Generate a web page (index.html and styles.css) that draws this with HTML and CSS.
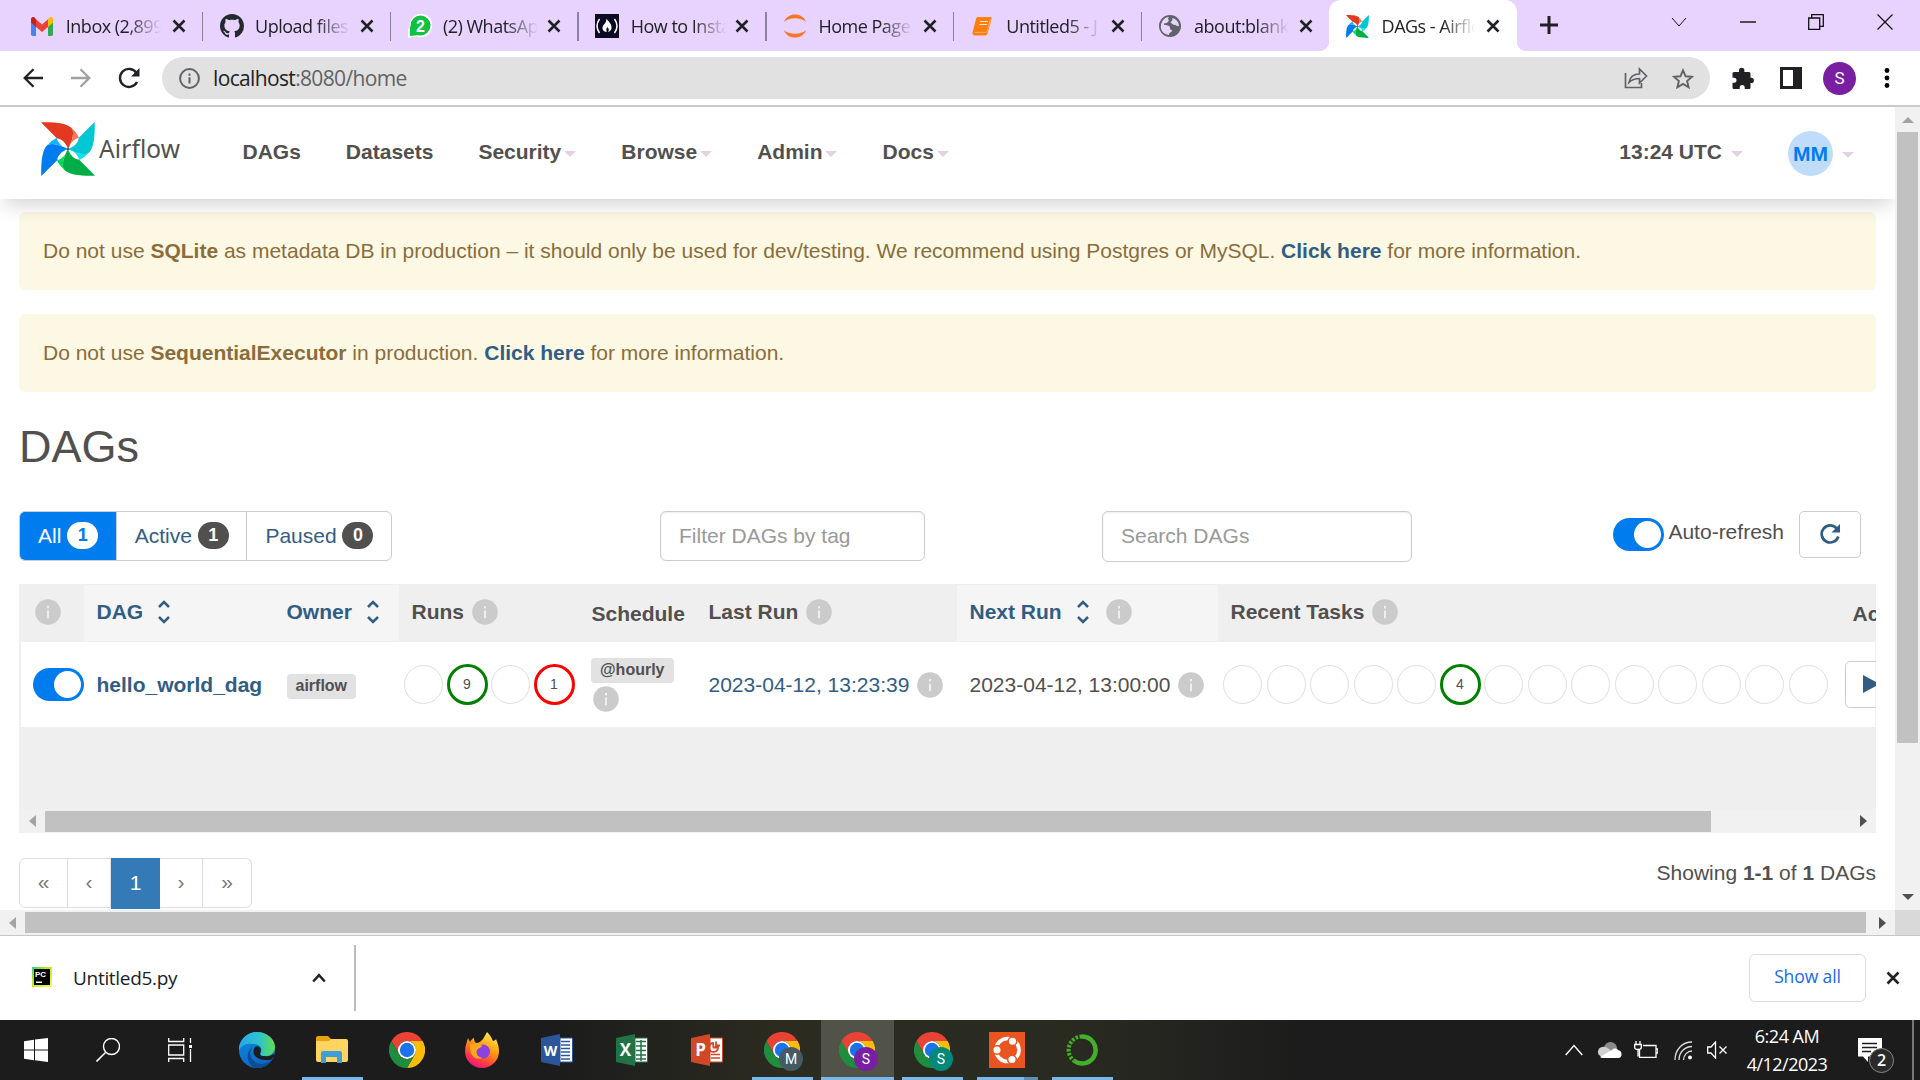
FILE: index.html
```html
<!DOCTYPE html>
<html lang="en">
<head>
<meta charset="utf-8">
<title>DAGs - Airflow</title>
<link rel="stylesheet" href="styles.css">
</head>
<body>
<svg class="defs" width="0" height="0">
  <symbol id="x" viewBox="0 0 14 14"><path d="M1.5 1.5l11 11M12.5 1.5l-11 11" stroke="#202124" stroke-width="2.6" fill="none"/></symbol>
  <symbol id="info" viewBox="0 0 26 26"><circle cx="13" cy="13" r="12.8" fill="#cbcbcb"/><path d="M12 7h2v2.6h-2zM12 11.4h2v7.8h-2z" fill="#efefef"/></symbol>
  <symbol id="sort" viewBox="0 0 12 24"><path d="M1 7l5-5 5 5M1 17l5 5 5-5" stroke="#315d84" stroke-width="2.5" fill="none"/></symbol>
  <symbol id="pin" viewBox="0 0 54 54">
    <g><path fill="#e43921" d="M0 .3C14 0 27 1 31.500 7C33.500 14 30 21 27 27C25 20 19 16 16 16.500Z"/><path fill="#ff7557" d="M31.500 7Q36 11 38 15.500C33 17 28 22 27 27C30 21 33.500 14 31.500 7Z"/></g>
    <g transform="rotate(90 27 27)"><path fill="#00c7d4" d="M0 .3C14 0 27 1 31.500 7C33.500 14 30 21 27 27C25 20 19 16 16 16.500Z"/><path fill="#11e1ee" d="M31.500 7Q36 11 38 15.500C33 17 28 22 27 27C30 21 33.500 14 31.500 7Z"/></g>
    <g transform="rotate(180 27 27)"><path fill="#00ad46" d="M0 .3C14 0 27 1 31.500 7C33.500 14 30 21 27 27C25 20 19 16 16 16.500Z"/><path fill="#04d659" d="M31.500 7Q36 11 38 15.500C33 17 28 22 27 27C30 21 33.500 14 31.500 7Z"/></g>
    <g transform="rotate(270 27 27)"><path fill="#017cee" d="M0 .3C14 0 27 1 31.500 7C33.500 14 30 21 27 27C25 20 19 16 16 16.500Z"/><path fill="#0cb6ff" d="M31.500 7Q36 11 38 15.500C33 17 28 22 27 27C30 21 33.500 14 31.500 7Z"/></g>
    <circle cx="27" cy="27" r="1.2" fill="#51504f"/>
  </symbol>
  <symbol id="chrome" viewBox="0 0 36 36">
    <path fill="#ea4335" d="M2.4 9A18 18 0 0 1 33.6 9H18A9 9 0 0 0 10.2 13.5L10.2 22.5Z"/>
    <path fill="#fbbc04" d="M33.6 9A18 18 0 0 1 18 36L25.8 22.5A9 9 0 0 0 18 9Z"/>
    <path fill="#1e8e3e" d="M2.4 9A18 18 0 0 0 18 36L25.8 22.5A9 9 0 0 1 10.2 22.5Z"/>
    <circle cx="18" cy="18" r="9" fill="#fff"/><circle cx="18" cy="18" r="7.2" fill="#1a73e8"/>
  </symbol>
</svg>

<header class="tabs">
  <div class="tab"><svg width="22" height="19" viewBox="0 0 22 17" preserveAspectRatio="none"><path fill="#4285f4" d="M0 2v13.500Q0 17 1.500 17H5V7z"/><path fill="#34a853" d="M17 17h3.500Q22 17 22 15.500V2l-5 5z"/><path fill="#ea4335" d="M5 9V2l6 4.600L17 2v7l-6 4.500z"/><path fill="#c5221f" d="M0 5V2.200C0 0 2.500-.8 4 .8L5 2v7z"/><path fill="#fbbc04" d="M22 5V2.200C22 0 19.500-.8 18 .8L17 2v7z"/></svg><span>Inbox (2,899)</span><svg class="close"><use href="#x"/></svg></div>
  <div class="tab sep"><svg width="24" height="24" viewBox="0 0 16 16"><path fill="#24292f" d="M8 0C3.580 0 0 3.580 0 8c0 3.540 2.290 6.530 5.470 7.590.4.070.55-.17.55-.38 0-.19-.01-.82-.01-1.490-2.010.37-2.530-.49-2.690-.94-.09-.23-.48-.94-.82-1.130-.28-.15-.68-.52-.01-.53.63-.01 1.080.58 1.230.82.72 1.210 1.870.87 2.330.66.07-.52.28-.87.51-1.070-1.780-.2-3.640-.89-3.640-3.950 0-.87.31-1.590.82-2.150-.08-.2-.36-1.020.08-2.120 0 0 .67-.21 2.200.82.64-.18 1.320-.27 2-.27s1.360.09 2 .27c1.530-1.040 2.200-.82 2.200-.82.44 1.100.16 1.920.08 2.120.51.56.82 1.270.82 2.150 0 3.070-1.870 3.750-3.650 3.950.29.25.54.73.54 1.480 0 1.070-.01 1.930-.01 2.200 0 .21.15.46.55.38A8 8 0 0 0 16 8c0-4.420-3.580-8-8-8z"/></svg><span>Upload files</span><svg class="close"><use href="#x"/></svg></div>
  <div class="tab sep"><svg width="24" height="24" viewBox="0 0 24 24"><circle cx="13" cy="11.500" r="11.500" fill="#fff"/><path fill="#fff" d="M0 24V14l10 8z"/><circle cx="12.500" cy="11.500" r="10" fill="#12c143"/><path fill="#12c143" d="M2 22V12l10 9z"/><text x="12.500" y="17.500" text-anchor="middle" class="wa">2</text></svg><span>(2) WhatsApp</span><svg class="close"><use href="#x"/></svg></div>
  <div class="tab sep"><svg width="24" height="24" viewBox="0 0 24 24"><path fill="#0a0a23" d="M0 0h24v24H0z"/><path d="M4.500 5Q-.5 12 4.500 19M19.500 5q5 7 0 14" stroke="#fff" stroke-width="1.500" fill="none"/><path fill="#fff" d="M11 5c3 2 6 6 5.500 9-.2 2-1.500 3.500-3.500 4 1.500-2 .8-4-.8-5-.2 1-1 2-.8 3 .1.800.5 1.500 0 2-3-.5-5-3-3.400-6C9 10 12 8 11 5z"/></svg><span>How to Install</span><svg class="close"><use href="#x"/></svg></div>
  <div class="tab sep"><svg width="24" height="24" viewBox="0 0 24 24"><path fill="#f37726" d="M1 8C4-2 20-2 23 8 18 3 6 3 1 8zM1 16c3 10 19 10 22 0-5 5-17 5-22 0z"/></svg><span>Home Page</span><svg class="close"><use href="#x"/></svg></div>
  <div class="tab sep"><svg width="24" height="24" viewBox="0 0 24 24"><path fill="#ff7f0e" d="M7 3h12.500q1.500 0 1 2l-4 14.500q-.5 2-2.500 2H4q-3 0-2.500-3L5 5q.5-2 2-2z"/><path d="M9 7.500h8M8.200 10.500h8" stroke="#ffe3cf" stroke-width="1.200" fill="none"/><path d="M3.500 18.500h11q1.200 0 1.600-1.400L19.500 5" stroke="#ffb877" stroke-width=".8" fill="none"/></svg><span>Untitled5 - J</span><svg class="close"><use href="#x"/></svg></div>
  <div class="tab sep"><svg width="22" height="22" viewBox="0 0 22 22"><circle cx="11" cy="11" r="11" fill="#5f6368"/><path fill="#e8d3ff" d="M10 2c-2 2 1 3-1 5s-4 0-4 3c2 0 6 0 6 3s3 1 2 3-3 1-3 4C4 19 1 15 2 10 3 5 6 2 10 2zM13 3c5 1 7 5 7 8-2 1-2-1-4-1s-2-1-4-2 3-2 1-5z"/></svg><span>about:blank</span><svg class="close"><use href="#x"/></svg></div>
  <div class="tab active"><svg width="23" height="23"><use href="#pin"/></svg><span>DAGs - Airflow</span><svg class="close"><use href="#x"/></svg></div>
  <svg class="plus" width="18" height="18" viewBox="0 0 18 18"><path d="M9 0v18M0 9h18" stroke="#202124" stroke-width="3"/></svg>
  <div class="winctl">
    <svg width="16" height="10" viewBox="0 0 16 10"><path d="M1 1l7 8 7-8" stroke="#111" fill="none"/></svg>
    <svg width="16" height="10" viewBox="0 0 16 10"><path d="M0 5h16" stroke="#111" stroke-width="1.400"/></svg>
    <svg width="16" height="16" viewBox="0 0 16 16"><path d="M.7 4h11v11.300H.7zM3.700 4V.7h11.600v11.600h-3.600" stroke="#111" stroke-width="1.300" fill="none"/></svg>
    <svg width="16" height="16" viewBox="0 0 16 16"><path d="M.5.5l15 15M15.500.5l-15 15" stroke="#111" stroke-width="1.200"/></svg>
  </div>
</header>

<div class="toolbar">
  <svg width="20" height="20" viewBox="0 0 20 20"><path d="M20 10H2M10.500 1.200L1.700 10l8.800 8.800" stroke="#202124" stroke-width="2.300" fill="none"/></svg>
  <svg width="20" height="20" viewBox="0 0 20 20"><path d="M0 10h18M9.500 1.200l8.800 8.800-8.800 8.800" stroke="#a0a0a2" stroke-width="2.300" fill="none"/></svg>
  <svg width="22" height="22" viewBox="0 0 22 22"><path d="M19 15a9 9 0 1 1-.5-9" stroke="#202124" stroke-width="2.400" fill="none"/><path d="M21.500 1v8.500H13z" fill="#202124"/></svg>
  <div class="omni">
    <svg width="21" height="21" viewBox="0 0 21 21"><circle cx="10.500" cy="10.500" r="9.400" stroke="#5f6368" stroke-width="2" fill="none"/><path d="M9.500 5.500h2v2.300h-2zM9.500 9.300h2v6.200h-2z" fill="#5f6368"/></svg>
    <div class="url">localhost<i>:8080/home</i></div>
    <svg width="24" height="22" viewBox="0 0 24 22"><path d="M1.500 6v14.500h16V16M5 15.500C6 9.500 10 7 15.500 7V2l7 7-7 7v-4.500C11 11.500 8 12.500 5 15.500z" stroke="#5f6368" stroke-width="1.700" fill="none"/></svg>
    <svg class="star" width="22" height="21" viewBox="0 0 22 21"><path d="M11 2.300l2.600 6 6.400.5-4.900 4.200 1.500 6.300-5.600-3.400-5.600 3.400L6.900 13 2 8.800l6.400-.5z" stroke="#5f6368" stroke-width="1.900" fill="none"/></svg>
  </div>
  <svg class="puzzle" width="22" height="22" viewBox="0 0 22 22"><path fill="#202124" d="M2 5h5V3.500a2.700 2.700 0 0 1 5.400 0V5H17q1.500 0 1.500 1.500v4.200h.7a2.700 2.700 0 0 1 0 5.400h-.7v4.400Q18.500 22 17 22h-4.300v-1.500a2.500 2.500 0 0 0-5 0V22H2Q.5 22 .5 20.500v-4.700H2a2.500 2.500 0 0 0 0-5H.5V6.500Q.5 5 2 5z"/></svg>
  <svg class="panel" width="22" height="22" viewBox="0 0 22 22"><path d="M1.500 1.500h19v19h-19z" stroke="#202124" stroke-width="3" fill="#fff"/><path d="M13 1h8v20h-8z" fill="#202124"/></svg>
  <div class="me">S</div>
  <svg width="6" height="20" viewBox="0 0 6 20"><circle cx="3" cy="2.500" r="2.400"/><circle cx="3" cy="10" r="2.400"/><circle cx="3" cy="17.500" r="2.400"/></svg>
</div>

<div class="viewport">
<main class="page">
  <nav class="nav">
    <svg class="logo" width="54" height="54"><use href="#pin"/></svg>
    <div class="brand">Airflow</div>
    <a>DAGs</a><a>Datasets</a><a>Security<b></b></a><a>Browse<b></b></a><a>Admin<b></b></a><a>Docs<b></b></a>
    <div class="clock">13:24 UTC<b></b></div>
    <div class="avatar">MM</div><b></b>
  </nav>
  <div class="content">
    <div class="alert">Do not use <strong>SQLite</strong> as metadata DB in production – it should only be used for dev/testing. We recommend using Postgres or MySQL. <a>Click here</a> for more information.</div>
    <div class="alert">Do not use <strong>SequentialExecutor</strong> in production. <a>Click here</a> for more information.</div>
    <h2>DAGs</h2>
    <div class="controls">
      <div class="group"><a class="on">All <em>1</em></a><a>Active <em>1</em></a><a>Paused <em>0</em></a></div>
      <div class="input tag">Filter DAGs by tag</div>
      <div class="input search">Search DAGs</div>
      <div class="toggle auto"></div><div class="autolabel">Auto-refresh</div>
      <div class="btn"><svg width="20" height="20" viewBox="0 0 20 20"><path d="M18.300 12.500a8.500 8.500 0 1 1-1.600-8" stroke="#315d84" stroke-width="2.700" fill="none"/><path d="M20 0v8.500h-8.500z" fill="#315d84"/></svg></div>
    </div>
    <div class="tablebox">
      <div class="grid head">
        <div class="c0"><svg class="info"><use href="#info"/></svg></div>
        <div class="lt"><a>DAG</a><svg class="sort"><use href="#sort"/></svg></div>
        <div class="lt"><a>Owner</a><svg class="sort"><use href="#sort"/></svg></div>
        <div>Runs<svg class="info"><use href="#info"/></svg></div>
        <div class="low">Schedule</div>
        <div>Last Run<svg class="info"><use href="#info"/></svg></div>
        <div class="lt"><a>Next Run</a><svg class="sort"><use href="#sort"/></svg><svg class="info far"><use href="#info"/></svg></div>
        <div>Recent Tasks<svg class="info"><use href="#info"/></svg></div>
        <div class="low">Actions</div>
      </div>
      <div class="grid row">
        <div class="c0"><div class="toggle"></div></div>
        <div><a class="dag">hello_world_dag</a></div>
        <div><span class="label">airflow</span></div>
        <div class="circles"><i></i><i class="ok">9</i><i></i><i class="bad">1</i></div>
        <div class="sched"><span class="label">@hourly</span><svg class="info"><use href="#info"/></svg></div>
        <div><a>2023-04-12, 13:23:39</a><svg class="info"><use href="#info"/></svg></div>
        <div>2023-04-12, 13:00:00<svg class="info"><use href="#info"/></svg></div>
        <div class="circles"><i></i><i></i><i></i><i></i><i></i><i class="ok">4</i><i></i><i></i><i></i><i></i><i></i><i></i><i></i><i></i></div>
        <div class="act"><div class="play"><svg width="17" height="18" viewBox="0 0 17 18"><path d="M0 0l17 9-17 9z" fill="#315d84"/></svg></div></div>
      </div>
      <div class="hscroll inner"><s class="left"></s><div class="thumb"></div><s class="right"></s></div>
    </div>
    <div class="foot">
      <div class="pages"><a>«</a><a>‹</a><a class="cur">1</a><a>›</a><a>»</a></div>
      <div>Showing <strong>1-1</strong> of <strong>1</strong> DAGs</div>
    </div>
  </div>
</main>
<div class="vscroll"><s class="up"></s><div class="thumb"></div><s class="down"></s></div>
</div>
<div class="bottomscroll"><div class="hscroll outer"><s class="left"></s><div class="thumb"></div><s class="right"></s></div></div>

<div class="downloads">
  <svg width="20" height="20" viewBox="0 0 20 20"><defs><linearGradient id="pc" x1="0" y1="0" x2="1" y2="1"><stop offset="0" stop-color="#21d789"/><stop offset=".35" stop-color="#b8e61a"/><stop offset="1" stop-color="#fcf84a"/></linearGradient></defs><path fill="url(#pc)" d="M0 0h20v20H0z"/><path d="M2 2h16v16H2z"/><text x="3" y="9.500" class="pctext">PC</text><path fill="#fff" d="M4 14.500h6V16H4z"/></svg>
  <span class="file">Untitled5.py</span>
  <svg class="chev" width="14" height="10" viewBox="0 0 14 10"><path d="M1.200 8.500L7 2.200l5.800 6.300" stroke="#202124" stroke-width="2.500" fill="none"/></svg>
  <div class="bar"></div>
  <div class="showall">Show all</div>
  <svg width="14" height="14"><use href="#x"/></svg>
</div>

<footer class="taskbar">
  <div class="sys"><svg width="24" height="24" viewBox="0 0 24 24"><path fill="#fff" d="M0 3.300l10-1.500V11.400H0zM11 1.600L24 0v11.400H11zM0 12.500h10v9.700L0 20.800zM11 12.500h13V24l-13-1.700z"/></svg></div>
  <div class="sys"><svg width="24" height="24" viewBox="0 0 24 24"><circle cx="15.500" cy="8.500" r="8" stroke="#fff" stroke-width="1.400" fill="none"/><path d="M9.500 14.500L.5 23.500" stroke="#fff" stroke-width="1.600"/></svg></div>
  <div class="sys"><svg width="24" height="24" viewBox="0 0 24 24"><path d="M.7 0v3.500h15V0M.7 7h15v10h-15zM.7 24v-3.500h15V24M22.500 0v5M22.500 11v13" stroke="#fff" stroke-width="1.300" fill="none"/><path fill="#fff" d="M21 7h3v3h-3z"/></svg></div>
  <div class="app first"><svg width="36" height="36" viewBox="0 0 36 36"><defs><linearGradient id="e1"><stop offset="0" stop-color="#2aa5e8"/><stop offset=".55" stop-color="#2cc3d0"/><stop offset="1" stop-color="#62dd4b"/></linearGradient><linearGradient id="e2" x1="0" y1="0" x2=".6" y2="1"><stop offset="0" stop-color="#0c8fe0"/><stop offset="1" stop-color="#0a63c2"/></linearGradient></defs><circle cx="18" cy="18" r="18" fill="url(#e2)"/><path fill="#0f4a93" d="M14 15c-6 6-2 16 8 17 4 0 7-1 10-3-3 5-8 7-14 7C8 35 5 20 14 15z"/><path fill="url(#e1)" d="M0 15C2 5 10 0 18 0c10 0 18 7 18 15 0 6-5 10-11 9-4 0-4-2-3-4 2-5-3-8-8-8C7 11 2 13 0 19z"/><path fill="#1d1d1d" d="M16 15c3-2 7 1 5.500 5-1 2-.5 4 3.500 4 4 .5 7 0 9-2l1.500 1.500-3 4C28 29 15 28 14.500 20c0-2 .5-4 1.500-5z"/></svg></div>
  <div class="app open"><svg width="32" height="28" viewBox="0 0 32 28"><path fill="#e5a50a" d="M0 2q0-2 2-2h10l3 3v4H0z"/><path fill="#ffd461" d="M0 5h13l2-2h15q2 0 2 2v19q0 2-2 2H2q-2 0-2-2z"/><path fill="#3e9ddb" d="M5 27V17q0-2 2-2h17q2 0 2 2v10h-5v-6H10v6z"/></svg></div>
  <div class="app"><svg width="36" height="36"><use href="#chrome"/></svg></div>
  <div class="app"><svg width="34" height="36" viewBox="0 0 34 36"><defs><linearGradient id="ff" x1=".8" y1="0" x2=".3" y2="1"><stop offset="0" stop-color="#fff44f"/><stop offset=".45" stop-color="#ff980e"/><stop offset=".8" stop-color="#ff3647"/><stop offset="1" stop-color="#e31587"/></linearGradient></defs><path fill="url(#ff)" d="M22 0c4 4 5 7 6 9 3-1 3-2 3-2 2 5 3 8 3 12 0 10-8 17-17 17S0 29 0 19c0-5 2-9 3-13l2 4c2-3 3-4 4-4 0 3 1 4 2 5 6 0 8-6 11-11z"/><circle cx="18" cy="19.500" r="7" fill="#8b42e0"/><path fill="#ffa71d" d="M5 13c5-2 11-2 12 1-1 2-4 2-5 4-2 4 2 8 6 8-8 3-14-3-13-13z"/></svg></div>
  <div class="app"><svg width="32" height="32" viewBox="0 0 32 32"><path fill="#2b579a" d="M0 4l19-4v32L0 28z"/><path fill="#fff" stroke="#2b579a" d="M19 4h12.500v24H19z"/><path d="M20 7.500h9M20 11h9M20 14.500h9M20 18h9M20 21.500h9M20 25h9" stroke="#2b579a" stroke-width="1.600"/><text x="9.500" y="22" text-anchor="middle" class="office w">W</text></svg></div>
  <div class="app"><svg width="32" height="32" viewBox="0 0 32 32"><path fill="#217346" d="M0 4l19-4v32L0 28z"/><path fill="#fff" stroke="#217346" d="M19 4h12.500v24H19z"/><path d="M20 7.500h10M20 12h10M20 16.500h10M20 21h10M20 25h10M25 6v21" stroke="#217346" stroke-width="1.500"/><text x="9.500" y="22" text-anchor="middle" class="office">X</text></svg></div>
  <div class="app"><svg width="32" height="32" viewBox="0 0 32 32"><path fill="#d24726" d="M0 4l19-4v32L0 28z"/><path fill="#fff" stroke="#d24726" d="M19 4h12.500v24H19z"/><path d="M20 20.500h9M20 24h9" stroke="#d24726" stroke-width="1.600"/><path fill="none" stroke="#d24726" stroke-width="1.800" d="M22 9a4.500 4.500 0 1 0 5 4.500h-4.500zM25 7.500v4h4"/><text x="9.500" y="22" text-anchor="middle" class="office">P</text></svg></div>
  <div class="app open"><svg width="36" height="36"><use href="#chrome"/></svg><span class="badge m">M</span></div>
  <div class="app open sel"><svg width="36" height="36"><use href="#chrome"/></svg><span class="badge p">S</span></div>
  <div class="app open"><svg width="36" height="36"><use href="#chrome"/></svg><span class="badge t">S</span></div>
  <div class="app open multi"><svg width="36" height="36" viewBox="0 0 36 36"><path fill="#e95420" d="M0 0h36v36H0z"/><circle cx="18.500" cy="18" r="11.500" stroke="#fff" stroke-width="3.600" fill="none"/><g fill="#fff" stroke="#e95420" stroke-width="1.500"><circle cx="8" cy="18" r="4.300"/><circle cx="23.500" cy="9.300" r="4.300"/><circle cx="23" cy="27.500" r="4.300"/></g></svg></div>
  <div class="app open"><svg width="32" height="32" viewBox="0 0 32 32"><path d="M16 2.500a13.500 13.500 0 1 1-8 24.300" stroke="#43b02a" stroke-width="4.500" fill="none"/><path d="M16 2.500A13.500 13.500 0 0 0 8 26.800" stroke="#43b02a" stroke-width="4" stroke-dasharray="2.500 1.500" fill="none"/></svg></div>
  <div class="tray">
    <svg width="18" height="12" viewBox="0 0 18 12"><path d="M.7 11L9 1.500l8.300 9.500" stroke="#fff" stroke-width="1.400" fill="none"/></svg>
    <svg class="cloud" width="24" height="17" viewBox="0 0 24 17"><path fill="#8b8b8b" d="M6 6a6.500 6.500 0 0 1 13 1l-8 6z"/><path fill="#d0d0d0" d="M1 13A5 5 0 0 1 4 5c5-1 8 3 10 5l-9 6z"/><path fill="#fff" d="M2 15l12-7c1-2 5-2 6 0 4 0 5 7 1 8H5q-2 0-3-1z"/></svg>
    <svg class="batt" width="24" height="18" viewBox="0 0 24 18"><path d="M9 4.500h13v11.800H5.500V9M22.500 8h1.300v4h-1.300M2 0v3.500M6 0v3.500M.7 3.500h6.600v3q0 2-3.300 2t-3.300-2zM4 8.500v7" stroke="#fff" stroke-width="1.300" fill="none"/></svg>
    <svg class="wifi" width="19" height="19" viewBox="0 0 19 19"><path d="M1 19C1 9 8 1 18 1M5 19C5 11 11 5.500 18 5.500M9.500 19c0-5 4-9 8.500-9" stroke="#ddd" stroke-width="1.300" fill="none"/><circle cx="16" cy="16.500" r="2" fill="#fff"/></svg>
    <svg class="vol" width="21" height="18" viewBox="0 0 21 18"><path d="M.7 6H4l4.500-5v16L4 12H.7zM12.500 5.500l7 7M19.500 5.500l-7 7" stroke="#fff" stroke-width="1.300" fill="none"/></svg>
    <div class="time">6:24 AM<br>4/12/2023</div>
    <div class="note"><svg width="24" height="24" viewBox="0 0 24 24"><path fill="#fff" d="M0 0h24v18.500H10V24l-5-5.500H0z"/><path d="M4 5.500h15M4 9.500h15M4 13.500h9" stroke="#1c1c1c" stroke-width="1.300"/></svg><span>2</span></div>
    <div class="peek"></div>
  </div>
</footer>
</body>
</html>
```

FILE: styles.css
```css
* { box-sizing: border-box; }
body { margin: 0; width: 1920px; height: 1080px; overflow: hidden; background: #fff; color: #51504f; font: 21px/30px "Liberation Sans", Arial, sans-serif; display: flex; flex-direction: column; }
svg { display: block; flex: none; }
.defs { position: absolute; }
a { color: #315d84; }
strong { font-weight: 700; }

/* Browser tab strip */
.tabs { flex: none; height: 51px; background: #e8d3ff; display: flex; padding-left: 14px; color: #202124; font: 18px/26px "Open Sans", sans-serif; }
.tab { width: 187.8px; flex: none; display: flex; align-items: center; padding: 1px 0 0 17px; position: relative; }
.sep { padding-left: 18px; }
.tab > svg:first-child { margin-right: auto; }
.tab span { width: 95px; overflow: hidden; white-space: nowrap; letter-spacing: -.5px; margin-right: 11px; margin-top: -1px; -webkit-mask-image: linear-gradient(90deg, #000 65%, transparent); mask-image: linear-gradient(90deg, #000 65%, transparent); }
.sep span { margin-right: 9.500px; }
.tab .close { width: 14px; height: 14px; margin-right: 16px; }
.tab.active span { width: 93px; margin-right: 11px; }
.tab.active .close { margin-right: 17.500px; }
.sep::before { content: ""; position: absolute; left: 0; top: 12px; width: 1.500px; height: 29px; background: #8e839c; }
.tab.active { background: #fff; border-radius: 12px 12px 0 0; width: 188.500px; }
.active::before, .active::after { content: ""; position: absolute; bottom: 0; width: 10px; height: 10px; }
.active::before { left: -10px; background: radial-gradient(circle at 0 0, transparent 10px, #fff 10.500px); }
.active::after { right: -10px; background: radial-gradient(circle at 100% 0, transparent 10px, #fff 10.500px); }
.plus { margin: 16px 0 0 23px; }
.winctl { margin-left: auto; padding: 0 27px 8px 0; width: 249px; display: flex; align-items: center; justify-content: space-between; }

/* Address toolbar */
.toolbar { flex: none; height: 56px; border-bottom: 2px solid #cacaca; display: flex; align-items: center; padding: 0 30px 0 23px; }
.toolbar > svg { margin-right: 28px; }
.toolbar > svg:nth-child(2) { margin-right: 27px; }
.toolbar > svg:nth-child(3) { margin-right: 22px; }
.omni { flex: 1; height: 42px; border-radius: 21px; background: #e1e1e1; display: flex; align-items: center; padding: 0 16px 0 17px; }
.url { flex: 1; margin-left: 13px; font: 21px/28px "Open Sans", sans-serif; letter-spacing: -.65px; color: #202124; }
.url i { font-style: normal; color: #5f6368; }
.star { margin-left: 24px; }
.toolbar > .puzzle { margin: 0 26px 0 22px; }
.toolbar > .panel { margin-right: 21px; }
.me { width: 33px; height: 33px; border-radius: 50%; background: #7b1fa2; color: #fff; font: 17px/33px Roboto, sans-serif; text-align: center; margin-right: 28px; }
.toolbar > svg:last-child { margin: 0; }

/* Page viewport */
.viewport { flex: none; height: 803px; display: flex; }
.page { width: 1895px; overflow: hidden; }
.nav { position: relative; z-index: 1; height: 92px; background: #fff; box-shadow: 0 8px 20px -4px rgba(0,0,0,.2); display: flex; align-items: center; padding: 0 41px 0 41px; font-weight: 700; }
.logo { margin-top: -9px; }
.brand { width: 125px; margin-left: 4px; margin-top: -8px; font: 24.500px/30px "Noto Sans", sans-serif; letter-spacing: .1px; }
.nav a { color: #51504f; margin: -3px 22.500px 0; white-space: nowrap; display: flex; align-items: center; }
.nav b { display: block; border: 6px solid transparent; border-top-color: #e1d3e4; border-bottom: 0; margin-left: 4px; margin-top: 3px; }
.nav a b { margin: 5px 0 0 3px; }
.nav .brand + a { margin-left: 18.500px; }
.clock { margin: -3px 0 0 auto; display: flex; align-items: center; }
.clock b { margin: 5px 0 0 9px; }
.avatar { width: 45px; height: 45px; line-height: 45px; border-radius: 50%; background: #bfddfb; color: #017cee; text-align: center; margin-left: 45px; }
.avatar + b { margin-left: 9px; }
.content { padding: 13px 19px 0; }
.alert { height: 78px; padding: 24px; border-radius: 6px; background: #fcf8e3; color: #8a6d3b; margin-bottom: 24px; white-space: nowrap; }
.alert a { font-weight: 700; }
h2 { margin: 29px 0 39px; font: 45px/51px "Liberation Sans", Arial, sans-serif; }

.controls { display: flex; align-items: flex-start; height: 73px; padding-right: 15px; }
.group { display: flex; height: 50px; width: 373px; border: 1.500px solid #ccc; border-radius: 6px; overflow: hidden; }
.group a { display: flex; align-items: center; padding: 0 16px 0 18px; border-left: 1px solid #ccc; white-space: pre; flex: 1 1 auto; }
.group a.on { background: #017cee; color: #fff; border: 0; margin: -1.500px 0 -1.500px -1px; padding-left: 19px; }
.group em { width: 31px; height: 27px; border-radius: 14px; background: #51504f; color: #fff; font: 700 18px/26px "Liberation Sans", Arial, sans-serif; text-align: center; margin-top: -1px; }
.group .on em { background: #fff; color: #017cee; }
.input { border: 1.500px solid #ccc; border-radius: 6px; padding: 9px 18px; color: #999; box-shadow: inset 0 1px 2px rgba(0,0,0,.08); }
.tag { width: 265px; height: 50px; margin-left: 268px; }
.search { width: 310px; height: 51px; margin-left: 177px; }
.toggle { width: 51px; height: 33px; border-radius: 17px; background: #017cee; padding: 3px; }
.toggle::after { content: ""; display: block; width: 27px; height: 27px; border-radius: 50%; background: #fff; margin-left: auto; }
.auto { margin: 7px 4px 0 auto; }
.autolabel { margin: 6px 15px 0 0; }
.btn { width: 62px; height: 47px; border: 1.500px solid #ccc; border-radius: 5px; display: grid; place-items: center; padding-bottom: 2px; }

.tablebox { height: 249px; background: #efefef; overflow: hidden; display: flex; flex-direction: column; }
.grid { display: grid; grid-template-columns: 65px 190px 125px 180px 117px 261px 261px 622px 200px; flex: none; }
.grid > div { display: flex; align-items: center; padding-left: 12.500px; white-space: nowrap; }
.grid > .c0 { padding-left: 14px; }
.head { height: 58px; font-weight: 700; padding: 1px 0; }
.head > div { padding-bottom: 2px; }
.head .low { padding: 2px 0 0 12.500px; }
.lt { background: #f5f5f5; }
.info { width: 26px; height: 26px; margin-left: 8px; }
.c0 .info { margin-left: 2px; }
.sort { width: 12px; height: 24px; margin-left: 15px; }
.info.far { margin-left: 17px; }
.row { height: 85px; background: #fff; margin: 0 1px 0 2px; }
.row > div { margin-left: -2px; }
.dag { font-weight: 700; }
.label { height: 25px; border-radius: 4px; background: #e2e2e2; font: 700 16px/24px "Liberation Sans", Arial, sans-serif; padding: 0 9px; margin-top: 4px; }
.grid > .circles { padding-left: 5px; gap: 4.500px; }
.circles i { width: 39px; height: 39px; border-radius: 50%; border: 1.500px solid #dedede; font: 14px/36px "Liberation Sans", Arial, sans-serif; text-align: center; flex: none; }
.circles .ok, .circles .bad { width: 41px; height: 41px; margin: 0 -1px; border: 3px solid green; line-height: 35px; }
.circles .bad { border-color: red; }
.grid > .sched { flex-direction: column; align-items: flex-start; padding: 16px 0 0 12px; }
.sched .label { margin: 0; }
.sched .info { margin: 3px 0 0 2px; }
.grid > .act { padding-left: 5px; }
.play { width: 62px; height: 47px; border: 1.500px solid #ccc; border-radius: 5px; padding: 13px 17px; }

/* Drawn scrollbars */
.hscroll { display: flex; align-items: center; background: #f1f1f1; }
.inner { margin-top: auto; height: 24px; padding: 0 9px 0 10px; }
.inner .thumb { width: 1666px; margin: 0 auto 0 9px; }
.hscroll .thumb { height: 21px; background: #c1c1c1; }
s { display: block; border: 6px solid transparent; }
s.left { border-right-color: #a3a3a3; border-left: 0; border-right-width: 7px; }
s.right { border-left-color: #505050; border-right: 0; border-left-width: 7px; }
s.up { border-bottom-color: #a3a3a3; border-top: 0; }
s.down { border-top-color: #505050; border-bottom: 0; }
.vscroll { width: 25px; background: #f1f1f1; display: flex; flex-direction: column; align-items: center; padding: 10px 0; }
.vscroll .thumb { width: 21px; height: 611px; background: #c1c1c1; margin: 9px 0 auto; }
.bottomscroll { flex: none; height: 26px; background: #d9d9d9; border-bottom: 1px solid #c6c6c6; }
.outer { width: 1895px; height: 25px; padding: 0 9px; }
.outer .thumb { flex: 1; margin: 0 13px 0 9px; }

.foot { display: flex; justify-content: space-between; margin-top: 25px; }
.pages { display: flex; height: 50px; width: 233px; border: 1.500px solid #ddd; border-radius: 6px; }
.pages a { width: 48px; text-align: center; line-height: 46px; color: #777; border-right: 1.500px solid #ddd; }
.pages a:nth-child(2), .pages a:nth-child(4) { width: 43px; }
.pages a:last-child { border: 0; }
.pages .cur { background: #337ab7; color: #fff; margin: -1.500px 0; line-height: 49px; border: 0; width: 49px; }

/* Downloads shelf */
.downloads { flex: none; height: 84px; display: flex; align-items: center; padding: 0 20px 0 32px; font: 19px/26px "Open Sans", sans-serif; color: #202124; }
.downloads > svg:first-child { margin-top: -2px; }
.file { width: 239px; margin-left: 21px; letter-spacing: -.3px; }
.bar { width: 2px; height: 66px; background: #bcbcbc; margin-left: 28px; }
.showall { width: 117px; height: 48px; margin: -1px 20px 0 auto; border: 1.500px solid #dadce0; border-radius: 6px; color: #1a6ae8; text-align: center; font-size: 17.500px; line-height: 43px; font-weight: 500; letter-spacing: -.1px; }

/* Windows taskbar */
.taskbar { flex: none; height: 60px; display: flex; background: linear-gradient(90deg, #1c1c1c 560px, #2b2b20 780px, #2a2b20 1050px, #22231f 1200px, #1c1c1c 1300px); color: #fff; }
.sys { width: 72px; display: grid; place-items: center; }
.app { width: 75px; display: grid; place-items: center; position: relative; }
.first { margin-left: 3px; }
.open::after { content: ""; position: absolute; left: 8px; right: 6px; bottom: 0; height: 3px; background: #76b9ed; }
.sel { background: linear-gradient(#515348, #515348) 2px 0 / 73px 100% no-repeat; }
.sel::after { left: 2px; right: 0; }
.multi::after { background: linear-gradient(90deg, #76b9ed 47px, #5b8fb8 47px); }
.badge { position: absolute; left: 35px; top: 27px; width: 24px; height: 24px; border-radius: 50%; font: 14px/24px Roboto, sans-serif; text-align: center; }
.m { background: #455a64; } .p { background: #7b1fa2; } .t { background: #00897b; }
.tray { margin-left: auto; display: flex; align-items: center; }
.cloud { margin: 0 12px 0 15px; }
.batt { margin-right: 16px; }
.wifi { margin-right: 14px; }
.vol { margin-right: 17px; }
.time { width: 84px; text-align: center; font: 18px/28px "Open Sans", sans-serif; letter-spacing: -.5px; white-space: nowrap; }
.note { position: relative; margin: 0 30px 0 29px; }
.note span { position: absolute; left: 11px; top: 10px; width: 25px; height: 25px; border: 1px solid #888; border-radius: 50%; background: #2a2a2a; font: 600 16px/23px "Open Sans", sans-serif; text-align: center; }
.peek { width: 2px; height: 60px; background: #777; margin-right: 6px; }
.wa { font: 700 16px "Liberation Sans", sans-serif; fill: #fff; }
.pctext { font: 700 8px "Liberation Sans", sans-serif; fill: #fff; }
.office { font: 700 17px "Open Sans", sans-serif; fill: #fff; }
.office.w { font-size: 14px; }
```
